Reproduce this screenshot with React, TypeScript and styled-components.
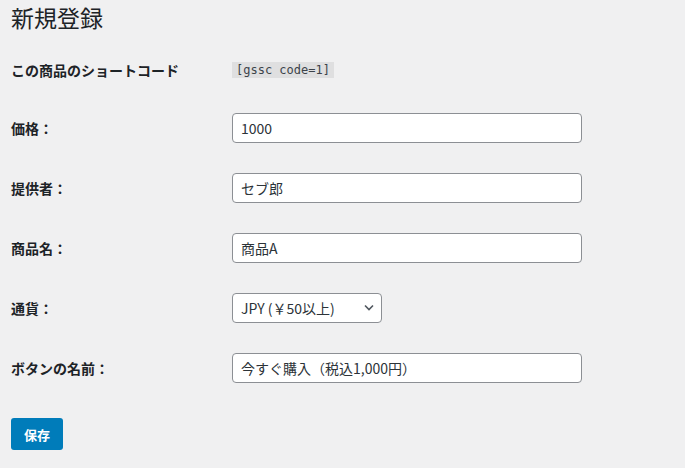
import React from "react";
import styled, { createGlobalStyle } from "styled-components";

const GlobalStyle = createGlobalStyle`
  html, body {
    margin: 0;
    padding: 0;
    background: #f0f0f1;
  }
  body {
    font-family: "Noto Sans CJK JP", "Noto Sans", sans-serif;
    color: #1d2327;
  }
`;

const Wrap = styled.div`
  padding: 2px 0 0 11px;
`;

const Title = styled.h1`
  margin: 0 0 9px;
  font-size: 23px;
  font-weight: 400;
  line-height: 30px;
  color: #1d2327;
`;

const FormTable = styled.div`
  display: grid;
  grid-template-columns: 221px 1fr;
`;

const Label = styled.div<{ $h: number }>`
  height: ${(p) => p.$h}px;
  display: flex;
  align-items: center;
  font-size: 14px;
  font-weight: 700;
  line-height: 18px;
`;

const Field = styled.div<{ $h: number }>`
  height: ${(p) => p.$h}px;
  display: flex;
  align-items: center;
`;

const Code = styled.code`
  font-family: "DejaVu Sans Mono", "Liberation Mono", monospace;
  font-size: 12px;
  line-height: 12px;
  padding: 2px 4px;
  background: rgba(0, 0, 0, 0.07);
  color: #3c434a;
`;

const TextInput = styled.input`
  box-sizing: border-box;
  width: 350px;
  height: 30px;
  padding: 0 8px;
  border: 1px solid #8c8f94;
  border-radius: 4px;
  background: #fff;
  font-family: "Noto Sans CJK JP", "Noto Sans", sans-serif;
  font-size: 14px;
  color: #2c3338;
  outline: none;
`;

const SelectBox = styled.div`
  position: relative;
  width: 150px;
  height: 30px;
`;

const Select = styled.select`
  box-sizing: border-box;
  width: 150px;
  height: 30px;
  padding: 0 24px 0 8px;
  border: 1px solid #8c8f94;
  border-radius: 4px;
  background: #fff;
  appearance: none;
  font-family: "Noto Sans CJK JP", "Noto Sans", sans-serif;
  font-size: 14px;
  color: #2c3338;
  outline: none;
`;

const Chevron = styled.svg`
  position: absolute;
  right: 8px;
  top: 11px;
  pointer-events: none;
`;

const SaveButton = styled.button`
  margin-top: 20px;
  height: 32px;
  padding: 0 13px;
  border: none;
  border-radius: 3px;
  background: #007cba;
  color: #fff;
  font-family: "Noto Sans CJK JP", "Noto Sans", sans-serif;
  font-size: 13px;
  font-weight: 700;
  cursor: pointer;
`;

const rows = [
  { label: "価格：", value: "1000" },
  { label: "提供者：", value: "セブ郎" },
  { label: "商品名：", value: "商品A" },
];

export default function App() {
  return (
    <>
      <GlobalStyle />
      <Wrap>
        <Title>新規登録</Title>
        <FormTable>
          <Label $h={57}>この商品のショートコード</Label>
          <Field $h={57}>
            <Code>[gssc code=1]</Code>
          </Field>
          {rows.map((r) => (
            <React.Fragment key={r.label}>
              <Label $h={60}>{r.label}</Label>
              <Field $h={60}>
                <TextInput defaultValue={r.value} />
              </Field>
            </React.Fragment>
          ))}
          <Label $h={60}>通貨：</Label>
          <Field $h={60}>
            <SelectBox>
              <Select defaultValue="JPY">
                <option value="JPY">JPY (￥50以上)</option>
                <option value="USD">USD</option>
              </Select>
              <Chevron width="10" height="7" viewBox="0 0 10 7">
                <path d="M1 1.5 L5 5.5 L9 1.5" fill="none" stroke="#50575e" strokeWidth="1.6" />
              </Chevron>
            </SelectBox>
          </Field>
          <Label $h={60}>ボタンの名前：</Label>
          <Field $h={60}>
            <TextInput defaultValue="今すぐ購入（税込1,000円）" />
          </Field>
        </FormTable>
        <SaveButton>保存</SaveButton>
      </Wrap>
    </>
  );
}
